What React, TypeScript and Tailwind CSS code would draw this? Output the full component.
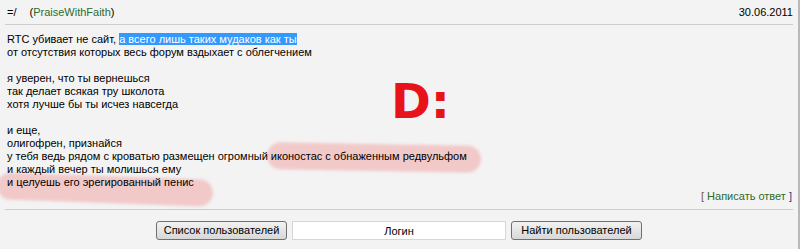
const lines: string[] = [
  'от отсутствия которых весь форум вздыхает с облегчением',
  '',
  'я уверен, что ты вернешься',
  'так делает всякая тру школота',
  'хотя лучше бы ты исчез навсегда',
  '',
  'и еще,',
  'олигофрен, признайся',
  'у тебя ведь рядом с кроватью размещен огромный иконостас с обнаженным редвульфом',
  'и каждый вечер ты молишься ему',
  'и целуешь его эрегированный пенис',
];

export default function App() {
  return (
    <div className="w-[800px] h-[249px] bg-[#f3f3f3] border-r-2 border-[#b9b9b9] font-['Liberation_Sans',Arial,sans-serif] text-[11px] leading-[13px] text-black overflow-hidden">
      <div className="px-[5px]">
        <div className="flex justify-between items-start h-[25px] pt-[6px] pl-[2px] border-b border-[#cdcdcd]">
          <div className="flex gap-[13px]">
            <span>=/</span>
            <span className="text-[#2d6b2d]">
              <span className="text-black">(</span>PraiseWithFaith<span className="text-black">)</span>
            </span>
          </div>
          <span>30.06.2011</span>
        </div>

        <div className="relative pt-[8px] pb-[6px] border-b border-[#cdcdcd]">
          <div className="absolute left-[262px] top-[119px] w-[214px] h-[27px] rounded-full bg-[#f2c9c9] blur-[1.5px] rotate-[1deg]" />
          <div className="absolute left-[-8px] top-[151px] w-[216px] h-[27px] rounded-full bg-[#f2c9c9] blur-[1.5px] rotate-[2deg]" />
          <div className="absolute left-[386px] top-[52px] text-[48px] leading-[48px] font-bold text-[#e8121b] font-['DejaVu_Sans',sans-serif]">
            D:
          </div>

          <div className="relative pl-[2px]">
            <div className="h-[13px] whitespace-nowrap">
              RTC убивает не сайт,{' '}
              <span className="bg-[#3399ff] text-white">а всего лишь таких мудаков как ты</span>
            </div>
            {lines.map((l, i) => (
              <div key={i} className="h-[13px] whitespace-nowrap">
                {l}
              </div>
            ))}
          </div>

          <div className="relative flex justify-end mt-[1px] pr-[1px] h-[13px]">
            <span className="text-[#7a5a30]">[</span>
            <span className="text-[#2d6b2d]">&nbsp;Написать ответ&nbsp;</span>
            <span className="text-[#1f3a7a]">]</span>
          </div>
        </div>

        <div className="flex justify-center items-center gap-[5px] pt-[11px]">
          <button className="w-[131px] h-[19px] rounded-[3px] border border-[#707070] bg-gradient-to-b from-[#f2f2f2] to-[#d8d8d8] text-[11px] text-black">
            Список пользователей
          </button>
          <input
            readOnly
            value="Логин"
            className="w-[214px] h-[19px] border border-[#d6d6d6] bg-white text-center text-[11px] text-black outline-none"
          />
          <button className="w-[131px] h-[19px] rounded-[3px] border border-[#707070] bg-gradient-to-b from-[#f2f2f2] to-[#d8d8d8] text-[11px] text-black">
            Найти пользователей
          </button>
        </div>
      </div>
    </div>
  );
}
